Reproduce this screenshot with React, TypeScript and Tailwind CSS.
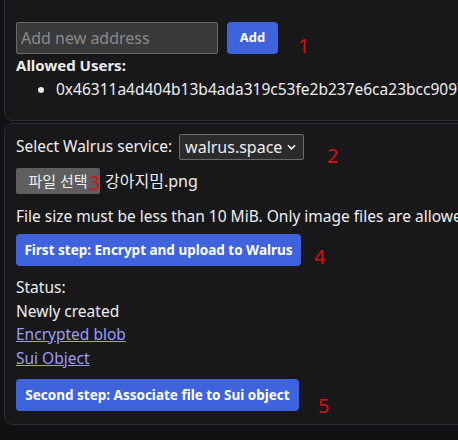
import React from "react";

const font = { fontFamily: '"Segoe UI", "Noto Sans", "Noto Sans CJK KR", sans-serif' };

function Marker({ n, className }: { n: string; className: string }) {
  return (
    <span className={`absolute text-[20px] leading-none text-[#d91010] ${className}`}>{n}</span>
  );
}

export default function App() {
  return (
    <div
      className="w-[458px] h-[440px] overflow-hidden bg-[#111113] text-[#eeeef0]"
      style={font}
    >
      <div className="w-[620px] pl-[4px] -mt-[8px] flex flex-col gap-[2px]">
        {/* allowlist card */}
        <div className="relative border border-[#2e2e33] bg-[#18181b] rounded-[8px] pl-[11px] pt-[29px] pb-[21px]">
          <div className="flex items-center gap-[9px]">
            <input
              placeholder="Add new address"
              className="w-[202px] h-[32px] px-[4px] text-[16px] bg-[#3a3a3a] border border-[#6b6b6b] rounded-[2px] placeholder:text-[#8a8a8a] outline-none"
            />
            <button className="h-[32px] w-[51px] rounded-[4px] bg-[#3e63dd] text-white text-[13px] font-bold">
              Add
            </button>
          </div>
          <Marker n="1" className="left-[293px] top-[43px]" />
          <div className="mt-[1px] text-[15px] font-bold leading-[20px]">Allowed Users:</div>
          <ul className="mt-[4px] pl-[40px] list-disc text-[15.5px] leading-[20px]">
            <li>0x46311a4d404b13b4ada319c53fe2b237e6ca23bcc9097a3c8d1f2e0b5a6c7d81</li>
          </ul>
        </div>

        {/* upload card */}
        <div className="relative border border-[#2e2e33] bg-[#18181b] rounded-[8px] pl-[11px] pt-[9px] pb-[13px] text-[15.5px]">
          <div className="flex items-center gap-[7px] h-[27px]">
            <span>Select Walrus service:</span>
            <div className="relative">
              <select className="appearance-none w-[125px] h-[26px] pl-[5px] text-[16px] bg-[#2b2b2b] border border-[#6b6b6b] rounded-[2px] text-[#eeeef0]">
                <option>walrus.space</option>
              </select>
              <svg
                viewBox="0 0 10 6"
                className="absolute right-[8px] top-[10px] w-[9px] h-[6px] pointer-events-none"
              >
                <path d="M1 1l4 4 4-4" fill="none" stroke="#eeeef0" strokeWidth="1.8" />
              </svg>
            </div>
          </div>
          <Marker n="2" className="left-[322px] top-[22px]" />

          <div className="mt-[8px] flex items-center h-[26px]">
            <span className="h-[26px] w-[84px] flex items-center justify-center bg-[#5e5e5e] rounded-[2px] text-[15px]">
              파일 선택
            </span>
            <span className="ml-[5px] text-[16px]">강아지밈.png</span>
          </div>
          <Marker n="3" className="left-[84px] top-[49px]" />

          <div className="mt-[11px] whitespace-nowrap leading-[22px]">
            File size must be less than 10 MiB. Only image files are allowed.
          </div>

          <button className="mt-[7px] h-[32px] w-[285px] rounded-[4px] bg-[#3e63dd] text-white text-[13.5px] font-bold">
            First step: Encrypt and upload to Walrus
          </button>
          <Marker n="4" className="left-[309px] top-[123px]" />

          <div className="mt-[10px] flex flex-col leading-[23.5px]">
            <span>Status:</span>
            <span>Newly created</span>
            <a href="#" className="underline text-[#9b9ef0] w-fit">Encrypted blob</a>
            <a href="#" className="underline text-[#9b9ef0] w-fit">Sui Object</a>
          </div>

          <button className="mt-[9px] h-[32px] w-[283px] rounded-[4px] bg-[#3e63dd] text-white text-[13.5px] font-bold">
            Second step: Associate file to Sui object
          </button>
          <Marker n="5" className="left-[313px] top-[272px]" />
        </div>
      </div>
    </div>
  );
}
